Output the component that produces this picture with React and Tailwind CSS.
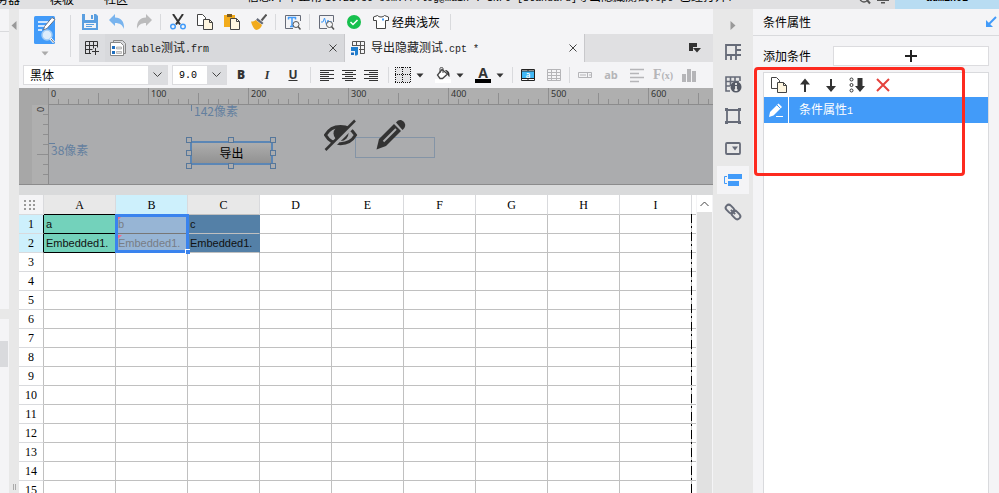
import clsx from 'clsx'

const COLUMNS = ['A', 'B', 'C', 'D', 'E', 'F', 'G', 'H', 'I']
const ROWS = Array.from({ length: 15 }, (_, i) => i + 1)
const TICKS = Array.from({ length: 120 }, (_, i) => i)
const V_TICKS = [1, 2, 3, 4, 5, 6, 7]

const CELLS = {
  A1: 'a', B1: 'b', C1: 'c',
  A2: 'Embedded1.', B2: 'Embedded1.', C2: 'Embedded1.',
}

const SANS = 'font-["Noto_Sans_CJK_SC",sans-serif]'

function Icon({ size = 16, children, className }) {
  return (
    <svg width={size} height={size} viewBox={`0 0 ${size} ${size}`} fill="none" className={clsx('shrink-0', className)} aria-hidden="true">
      {children}
    </svg>
  )
}

function Mono({ children }) {
  return <span className='font-["Liberation_Mono",monospace] text-[10px]'>{children}</span>
}

function ToolButton({ label, children, className = 'w-[27px]' }) {
  return (
    <button type="button" aria-label={label} className={clsx('flex h-6 shrink-0 items-center justify-center', className)}>
      {children}
    </button>
  )
}

function Divider({ className }) {
  return <span className={clsx('h-4 w-px shrink-0 bg-[#d9dadd]', className)} />
}

function Caret({ className = 'text-[#333]' }) {
  return (
    <svg width="8" height="5" viewBox="0 0 8 5" className={clsx('shrink-0', className)} aria-hidden="true">
      <path d="M0.5 0.5h7L4 4.5z" fill="currentColor" />
    </svg>
  )
}

/* ---------- top strip ---------- */

function TopStrip() {
  return (
    <header className="flex h-[9px] shrink-0 items-end overflow-hidden bg-[#e0e0e2] text-xs leading-3 text-black">
      <nav className="flex w-[247px] shrink-0 items-end gap-[30px] overflow-hidden pb-1 whitespace-nowrap">
        <span className="-ml-4">服务器</span>
        <span>模板</span>
        <span>社区</span>
      </nav>
      <div className="flex min-w-0 flex-1 items-end overflow-hidden pb-1 whitespace-nowrap">
        <p className="w-[330px] shrink-0">信息:下午正常 <Mono>10:21:36 com.fr.log@main : INFO [Standard]</Mono></p>
        <p>导出隐藏测试<Mono>.cpt </Mono>已经打开<Mono>!</Mono></p>
      </div>
      <div className="flex h-[9px] shrink-0 gap-1.5 pr-1.5">
        <svg width="12" height="9" viewBox="0 0 12 9" fill="none" stroke="#555" aria-hidden="true">
          <circle cx="5" cy="-2" r="4" strokeWidth="1.5" />
          <path d="M8 0l3 3.500" strokeWidth="2" />
        </svg>
        <svg width="12" height="9" viewBox="0 0 12 9" fill="#555" aria-hidden="true">
          <path d="M0 0h12v1H0zM4 2h4v1.500H4z" />
        </svg>
      </div>
      <div className="flex h-[9px] w-[104px] shrink-0 items-end justify-center overflow-hidden bg-[#b8dcf2] pb-1 font-bold">
        <Mono>admin01</Mono>
      </div>
    </header>
  )
}

/* ---------- toolbar ---------- */

function PreviewButton() {
  return (
    <button type="button" aria-label="预览" className="flex w-[51px] shrink-0 flex-col items-center gap-1.5 pt-[7px]">
      <svg width="22" height="29" viewBox="0 0 22 29" fill="none" aria-hidden="true">
        <rect x="0" y="0" width="21" height="28" rx="1.500" fill="#429bf9" />
        <path d="M4 6h10M4 10h7M4 14h4" stroke="#fff" strokeWidth="1.500" />
        <path d="M18 1.500l3 2-8 9-3.500 1.500 1-3.500z" fill="#fff" stroke="#666b78" strokeWidth=".9" />
        <circle cx="13" cy="19" r="5" fill="#dcecfb" stroke="#9fcbf6" strokeWidth="1.500" />
        <path d="M16.500 22.500l3.500 4" stroke="#fff" strokeWidth="2.500" />
        <path d="M17 23l3 3.500" stroke="#666b78" />
      </svg>
      <Caret className="text-[#aaa]" />
    </button>
  )
}

function MainTools() {
  return (
    <div className="flex h-[25px] items-center pl-[5px]">
      <ToolButton label="保存">
        <Icon>
          <path d="M0 0h14l2 2v14H0z" fill="#5b9fe0" />
          <path d="M3 0h9v6H3z" fill="#f4f4f6" />
          <path d="M9 1h2v4H9z" fill="#5b9fe0" />
          <path d="M2 9h12v5H2z" fill="#f4f4f6" />
          <path d="M4 10.500h8M4 12.500h6" stroke="#5b9fe0" />
        </Icon>
      </ToolButton>
      <ToolButton label="撤销">
        <Icon>
          <path d="M0 6l6-6v3.500c6 0 9.500 4 9 11.500-1.500-4-4-6-9-6V12z" fill="#79b4ee" />
        </Icon>
      </ToolButton>
      <ToolButton label="重做">
        <Icon>
          <path d="M16 6l-6-6v3.500c-6 0-9.500 4-9 11.500 1.500-4 4-6 9-6V12z" fill="#bbbbbc" />
        </Icon>
      </ToolButton>
      <Divider className="mx-[3px]" />
      <ToolButton label="剪切">
        <Icon>
          <path d="M3 0l7 10.500M13 0L6 10.500" stroke="#333" strokeWidth="2" />
          <circle cx="3" cy="12.500" r="2.300" stroke="#429bf9" strokeWidth="1.500" />
          <circle cx="13" cy="12.500" r="2.300" stroke="#429bf9" strokeWidth="1.500" />
        </Icon>
      </ToolButton>
      <ToolButton label="复制"><CopyIcon /></ToolButton>
      <ToolButton label="粘贴">
        <Icon>
          <path d="M0 1h11v12H0z" fill="#f2ab1c" />
          <path d="M3 0h5v3H3z" fill="#7b5b22" />
          <path d="M6.500 4.500h6l3 3v8h-9z" fill="#fff6e0" stroke="#444" />
          <path d="M12.500 4.500v3h3" stroke="#444" />
        </Icon>
      </ToolButton>
      <ToolButton label="格式刷">
        <Icon>
          <path d="M15.500 0.500l-5 6" stroke="#555" strokeWidth="2" />
          <path d="M6.500 4l6 5-1.500 1.500-6-4.500z" fill="#666b78" />
          <path d="M4.500 6l6.500 5c-1 3-3 4.500-6 5-2-1-4-4-5-8.500 2 0 3.500-.5 4.500-1.500z" fill="#f2ab1c" />
        </Icon>
      </ToolButton>
      <Divider className="mx-[3px]" />
      <ToolButton label="文本搜索">
        <Icon>
          <path d="M15.500 7V1.500h-15v13H8" stroke="#666b78" />
          <path d="M3 3.500h8M7 3.500v9M3.500 3v2.500M10.500 3v2.500M5 12.500h4" stroke="#429bf9" strokeWidth="1.500" />
          <circle cx="11" cy="10.500" r="3" fill="#f4f4f6" stroke="#555" />
          <path d="M13 12.500l2.500 3" stroke="#555" strokeWidth="1.500" />
        </Icon>
      </ToolButton>
      <Divider className="mx-[3px]" />
      <ToolButton label="性能分析">
        <Icon>
          <path d="M14.500 8V1.500h-14v13H8" stroke="#666b78" />
          <path d="M2 8h2l1.500-4 2 7L9 6l1 2h3" stroke="#429bf9" />
          <circle cx="10.500" cy="10.500" r="3" fill="#f4f4f6" stroke="#555" />
          <path d="M12.500 12.500l2.500 3" stroke="#555" strokeWidth="1.500" />
        </Icon>
      </ToolButton>
      <ToolButton label="校验">
        <Icon>
          <circle cx="8" cy="8" r="7" fill="#17c04e" />
          <path d="M4.500 8l2.500 2.500 4.500-4.500" stroke="#fff" strokeWidth="1.500" />
        </Icon>
      </ToolButton>
      <button type="button" className="ml-1.5 flex shrink-0 items-center gap-[3px] text-xs leading-4 text-black">
        <Icon>
          <path d="M4.500 1.500L.5 3v3.500h3v8h9v-8h3V3l-4-1.500c-1 2-6 2-7 0z" fill="#fff" stroke="#444" />
          <path d="M9 5.500h2" stroke="#429bf9" strokeWidth="2" />
        </Icon>
        经典浅灰
      </button>
      <Divider className="ml-2.5" />
    </div>
  )
}

function CopyIcon() {
  return (
    <Icon>
      <path d="M.5.5h5l3 3v8h-8z" fill="#fff" stroke="#444" />
      <path d="M6.500 5.500h6l3 3v7h-9z" fill="#fff6e0" stroke="#444" />
      <path d="M12.500 5.500v3h3" stroke="#444" />
    </Icon>
  )
}

function CloseIcon() {
  return (
    <svg width="8" height="8" viewBox="0 0 8 8" stroke="#444" aria-hidden="true">
      <path d="M.5.5l7 7M7.500.5l-7 7" />
    </svg>
  )
}

function Tab({ icon, active, children }) {
  return (
    <div
      className={clsx(
        'flex h-7 w-60 shrink-0 items-center border-r border-[#c8c8cb] pr-[7px] pl-[5px]',
        active ? 'bg-[#f4f4f6]' : 'bg-[#d8d9dc]',
      )}
    >
      {icon}
      <span className="ml-[5px] flex-1 text-xs leading-4 whitespace-pre text-[#222]">{children}</span>
      <button type="button" aria-label="关闭"><CloseIcon /></button>
    </div>
  )
}

function TabBar() {
  return (
    <div className="ml-2 flex h-7 bg-[#e0e0e2]">
      <ToolButton label="新建" className="h-7 w-[26px] bg-[#dcdde0]">
        <Icon>
          <path d="M1.500 13.500v-12h12v6M1.500 5.500h12M1.500 9.500h7M5.500 1.500v12M9.500 1.500v7M1 13.500h6M11.500 8v7M8 11.500h7" stroke="#333" />
        </Icon>
      </ToolButton>
      <Tab
        icon={
          <Icon>
            <path d="M3.500 2V.5h9l3 3v10h-2" stroke="#888" />
            <path d="M.5 2.500h10l3 3v10H.5z" fill="#fff" stroke="#888" />
            <path d="M2 6h3v3H2zM2 11h3v3H2z" fill="#1f6fc0" />
            <path d="M6.500 7h5v2h-5zM6.500 11.500h5v2h-5z" fill="#ddd" stroke="#999" strokeWidth=".6" />
          </Icon>
        }
      >
        <Mono>table</Mono>测试<Mono>.frm</Mono>
      </Tab>
      <Tab
        active
        icon={
          <Icon>
            <path d="M2.500 5V1.500h12v12H10M2 5.500h12.500M6.500 1.500v4M10.500 1.500v12M9 9.500h5.500" stroke="#555" />
            <path d="M1 7h7v7.500c-1 1-2 1-3 1V11H1z" fill="#1f7fd0" />
            <path d="M1 12.500h3V15H1z" fill="#1f6fc0" />
          </Icon>
        }
      >
        导出隐藏测试<Mono>.cpt *</Mono>
      </Tab>
      <div className="flex flex-1 items-center justify-end pr-3">
        <button type="button" aria-label="标签列表">
          <svg width="12" height="10" viewBox="0 0 12 10" fill="#333" aria-hidden="true">
            <path d="M0 0h8v4H4v4H0zM4 5h8L8 9.500z" />
          </svg>
        </button>
      </div>
    </div>
  )
}

/* ---------- format bar ---------- */

function Picker({ label, value, className, mono }) {
  return (
    <div className={clsx('relative flex h-5 shrink-0 border border-[#dcdcdf] bg-white', className)}>
      <select
        aria-label={label}
        className={clsx(
          'w-full appearance-none pl-1.5 text-black outline-none',
          mono ? 'font-["Liberation_Mono",monospace] text-[10px]' : 'text-xs leading-4',
        )}
      >
        <option>{value}</option>
      </select>
      <span className="pointer-events-none absolute inset-y-0 right-0 flex w-[19px] items-center justify-center bg-[#dcdde0]">
        <svg width="9" height="6" viewBox="0 0 9 6" fill="none" stroke="#444" aria-hidden="true">
          <path d="M.5.5l4 4 4-4" />
        </svg>
      </span>
    </div>
  )
}

function AlignIcon({ d }) {
  return (
    <Icon className="text-[#333]">
      <path d={d} stroke="currentColor" />
    </Icon>
  )
}

function FormatBar() {
  return (
    <div className="flex h-[26px] items-center bg-[#f4f4f6] pl-1">
      <Picker label="字体" value="黑体" className="w-[145px]" />
      <Picker label="字号" value="9.0" className="mr-px ml-1 w-[55px]" mono />
      <ToolButton label="加粗" className="w-[26px]">
        <b className='font-["Open_Sans",sans-serif] text-xs font-extrabold text-[#333]'>B</b>
      </ToolButton>
      <ToolButton label="斜体" className="w-[26px]">
        <i className='font-["Liberation_Serif",serif] text-xs font-bold text-[#333]'>I</i>
      </ToolButton>
      <ToolButton label="下划线" className="w-[26px]">
        <u className='font-["Open_Sans",sans-serif] text-xs font-bold text-[#333]'>U</u>
      </ToolButton>
      <Divider className="mr-[5px] ml-1" />
      <ToolButton label="左对齐" className="w-[22px]">
        <AlignIcon d="M1 3.500h14M1 5.500h9M1 7.500h14M1 9.500h9M1 11.500h14M1 13.500h9" />
      </ToolButton>
      <ToolButton label="居中" className="w-[22px]">
        <AlignIcon d="M1 3.500h14M4 5.500h8M1 7.500h14M4 9.500h8M1 11.500h14M4 13.500h8" />
      </ToolButton>
      <ToolButton label="右对齐" className="w-[22px]">
        <AlignIcon d="M1 3.500h14M6 5.500h9M1 7.500h14M6 9.500h9M1 11.500h14M6 13.500h9" />
      </ToolButton>
      <Divider className="mr-px ml-1.5" />
      <div className="flex shrink-0 items-center gap-1.5">
        <div className="flex items-center">
          <ToolButton label="边框" className="w-[26px]">
            <Icon>
              <path d="M1 1h14v14H1z" fill="#e4e4e6" />
              <path d="M0 .5h16M0 15.500h16M.5 0v16M15.500 0v16M0 7.500h16M7.500 0v16" stroke="#111" strokeDasharray="1 1" />
            </Icon>
          </ToolButton>
          <Caret />
        </div>
        <div className="flex items-center">
          <ToolButton label="背景色" className="w-[26px]">
            <Icon>
              <path d="M0 12h16v4H0z" fill="#fff" />
              <path d="M7 2.500l5.500 4.500-5 4.500H5L2.500 8z" fill="#fff" stroke="#444" strokeWidth="1.300" />
              <path d="M5 6V1.500c0-1.500 3-1.500 3 0V6" stroke="#444" />
              <path d="M10 3c3 0 5 2 4.500 7-1-.5-2-2-2-4z" fill="#333" />
            </Icon>
          </ToolButton>
          <Caret />
        </div>
        <div className="flex items-center">
          <ToolButton label="字体颜色" className="w-[26px]">
            <span className='flex w-4 justify-center border-b-4 border-black font-["Open_Sans",sans-serif] text-sm leading-3 font-bold text-[#333]'>A</span>
          </ToolButton>
          <Caret />
        </div>
      </div>
      <Divider className="mr-0.5 ml-2" />
      <ToolButton label="合并单元格" className="w-[26px]">
        <Icon>
          <path d="M1.500 2.500h13v11h-13z" fill="#fff" stroke="#222" />
          <path d="M2 4h12v7.500H2z" fill="#41b8f5" />
          <path d="M1 4h14M1 11.500h14M8 2v2M8 12v2" stroke="#222" />
          <text x="8" y="10.500" textAnchor="middle" fill="#fff" fontSize="8" fontFamily="Open Sans" fontWeight="600">a</text>
        </Icon>
      </ToolButton>
      <ToolButton label="拆分单元格" className="w-[26px]">
        <Icon>
          <path d="M1.500 2.500h13v11h-13zM1 5.500h14M1 8.500h14M1 11.500h14M5.500 2v12M10.500 2v12" stroke="#b5b5b8" />
        </Icon>
      </ToolButton>
      <Divider className="mx-0.5" />
      <ToolButton label="控件" className="w-[26px]">
        <Icon>
          <path d="M1.500 5.500h13v5h-13zM10.500 5v6M3 8h6M12 8h2" stroke="#b5b5b8" />
        </Icon>
      </ToolButton>
      <ToolButton label="文本" className="w-[26px]">
        <span className='font-["Open_Sans",sans-serif] text-[11px] font-bold text-[#b5b5b8]'>ab</span>
      </ToolButton>
      <ToolButton label="富文本" className="w-[26px]">
        <Icon>
          <path d="M1 2.500h14M1 6.500h9M1 10.500h14M1 14.500h9" stroke="#b5b5b8" strokeWidth="1.500" />
        </Icon>
      </ToolButton>
      <ToolButton label="公式" className="w-[26px]">
        <span className='font-["Liberation_Serif",serif] text-sm font-bold text-[#b5b5b8]'>F<span className="text-[10px]">(x)</span></span>
      </ToolButton>
      <ToolButton label="图表" className="w-[26px]">
        <Icon>
          <path d="M1 7h4v8H1zM6 2h4v13H6zM11 4h4v11h-4z" fill="#b5b5b8" />
        </Icon>
      </ToolButton>
    </div>
  )
}

/* ---------- parameter canvas ---------- */

function Ruler() {
  return (
    <div className="flex h-[17px] bg-[#afafaf]">
      <div className="w-[29px] shrink-0 bg-[#a7a7a7]" />
      <div className="flex min-w-0 flex-1 items-end overflow-hidden border-b border-[#8b8b8c]">
        {TICKS.map((i) => (
          <span
            key={i}
            className={clsx(
              'relative w-2.5 shrink-0 border-l border-[#8f8f90]',
              i % 10 === 0 ? 'h-4' : i % 5 === 0 ? 'h-[11px]' : 'h-[5px]',
            )}
          >
            {i % 10 === 0 && (
              <span className='absolute top-0 left-0.5 font-["Noto_Sans",sans-serif] text-[9px] leading-3 text-[#333]'>
                {i * 10}
              </span>
            )}
          </span>
        ))}
      </div>
    </div>
  )
}

const HANDLES = [
  'left-[137px] top-8', 'left-[179px] top-8', 'left-[221px] top-8',
  'left-[137px] top-[45px]', 'left-[221px] top-[45px]',
  'left-[137px] top-[58px]', 'left-[179px] top-[58px]', 'left-[221px] top-[58px]',
]

function Canvas() {
  return (
    <div className="flex h-20 border-b border-[#8b8b8c]">
      <div className="w-[13px] shrink-0 bg-[#a7a7a7]" />
      <div className="flex w-[17px] shrink-0 flex-col items-end border-r border-[#8b8b8c] bg-[#afafaf]">
        <span className='flex h-[9px] w-full -rotate-90 items-center justify-center font-["Noto_Sans",sans-serif] text-[9px] leading-3 text-[#333]'>0</span>
        {V_TICKS.map((i) => (
          <span key={i} className={clsx('h-2.5 shrink-0 border-t border-[#8f8f90]', i === 5 ? 'w-[11px]' : 'w-[5px]')} />
        ))}
      </div>
      {/* free-form widget area */}
      <div className="relative min-w-0 flex-1 overflow-hidden bg-[#abacae] text-xs leading-3 text-[#64809f]">
        <span className="absolute top-0 left-[142px] h-1.5 w-px bg-[#64809f]" />
        <span className="absolute top-0 left-[145px]">142像素</span>
        <span className="absolute top-[38px] left-0 h-px w-1.5 bg-[#64809f]" />
        <span className="absolute top-[39px] left-0.5">38像素</span>
        <button
          type="button"
          className="absolute top-9 left-[141px] h-6 w-[83px] border-2 border-[#5b86b5] bg-linear-to-b from-[#adadad] to-[#929292] text-black"
        >
          导出
        </button>
        {HANDLES.map((pos) => (
          <span key={pos} className={clsx('absolute size-1.5 border border-[#56779b] bg-[#abacae]', pos)} />
        ))}
        <input aria-label="文本框" className="absolute top-8 left-[306px] h-[21px] w-20 border border-[#8494a6]" />
        <svg className="absolute top-3.5 left-[275px]" width="34" height="33" viewBox="0 0 34 33" fill="none" aria-hidden="true">
          <path d="M1.500 16C8 4.500 25 4.500 31.500 16C25 27.500 8 27.500 1.500 16z" stroke="#333" strokeWidth="3" />
          <circle cx="17" cy="14.500" r="7.500" fill="#333" />
          <path d="M33 3L3 33" stroke="#abacae" strokeWidth="4" />
          <path d="M31 1.500L1.500 31" stroke="#333" strokeWidth="2.500" />
        </svg>
        <svg className="absolute top-3.5 left-[326px]" width="32" height="32" viewBox="0 0 32 32" fill="none" aria-hidden="true">
          <path d="M4 20L19 5l7 7-15 15-9.500 3.500z" fill="#333" />
          <path d="M21 3.500c2.500-3.500 5.500-3 7.500-1s2.500 5 0 7.500l-1 1z" fill="#333" />
          <path d="M8.500 22.500L21 10" stroke="#abacae" strokeWidth="2" />
        </svg>
      </div>
    </div>
  )
}

/* ---------- sheet ---------- */

function cellClass(col, row) {
  if (row > 2) return 'border-[#c0c0c0]'
  if (col === 'A') return 'border-black bg-[#73d2bb] text-[#111]'
  if (col === 'B') return 'border-[#777] bg-[#97b5d5] text-[#777d86]'
  if (col === 'C') return 'border-r-[#5480a7] border-b-[#c0c0c0] bg-[#5480a7] text-[#111]'
  return 'border-[#c0c0c0]'
}

function Sheet() {
  return (
    <div className="flex min-h-0 flex-1">
      <div className="relative min-w-0 flex-1 overflow-hidden bg-white">
        <table className="w-full table-fixed border-separate border-spacing-0 text-black">
          <thead className='font-["Liberation_Serif",serif] text-xs leading-4'>
            <tr className="h-5">
              <th className="w-[25px] border-r border-b border-[#d9dadd] bg-[#f4f4f6] p-0">
                <svg width="24" height="16" viewBox="0 0 24 16" aria-hidden="true">
                  <path d="M5 3h2v2H5zm5 0h2v2h-2zm4 0h2v2h-2zM5 7h2v2H5zm5 0h2v2h-2zm4 0h2v2h-2zM5 11h2v2H5zm5 0h2v2h-2zm4 0h2v2h-2z" fill="#999" />
                </svg>
              </th>
              {COLUMNS.map((col) => (
                <th
                  key={col}
                  scope="col"
                  className={clsx(
                    'w-[72px] border-r border-b border-r-[#d9dadd] p-0 font-medium',
                    col === 'A' ? 'border-b-black' : 'border-b-[#c0c0c0]',
                    col === 'B' ? 'bg-[#cdf0fc]' : 'ABC'.includes(col) ? 'bg-[#e8e8e8]' : 'bg-white',
                  )}
                >
                  {col}
                </th>
              ))}
              <th className="border-b border-[#c0c0c0] p-0" />
            </tr>
          </thead>
          <tbody>
            {ROWS.map((row) => (
              <tr key={row} className="h-[19px]">
                <th
                  scope="row"
                  className={clsx(
                    'border-r border-b border-b-[#d9dadd] p-0 font-["Liberation_Serif",serif] text-xs leading-4 font-medium',
                    row < 3 ? 'border-r-black bg-[#cdf0fc]' : 'border-r-[#c0c0c0] bg-white',
                  )}
                >
                  {row}
                </th>
                {COLUMNS.map((col) => (
                  <td
                    key={col}
                    className={clsx(
                      'relative border-r border-b p-0 pl-0.5 font-["Liberation_Sans",sans-serif] text-[11px] leading-4',
                      cellClass(col, row),
                    )}
                  >
                    {CELLS[col + row]}
                    {/* condition marker */}
                    {col === 'B' && row < 3 && (
                      <span className="absolute top-px left-0.5 border-t-4 border-r-4 border-t-[#f46a8a] border-r-transparent" />
                    )}
                    {/* selection frame over B1:B2 */}
                    {col === 'B' && row === 1 && (
                      <span className="pointer-events-none absolute -top-px -left-px z-10 h-[39px] w-[74px] border-[3px] border-[#3a83ee]">
                        <span className="absolute -right-1 -bottom-1 size-[5px] border-t border-l border-white bg-[#3a83ee]" />
                      </span>
                    )}
                  </td>
                ))}
                <td className="border-b border-[#c0c0c0] p-0" />
              </tr>
            ))}
          </tbody>
        </table>
        {/* page break */}
        <span className="absolute top-[19px] bottom-0 left-[672px] w-px bg-[repeating-linear-gradient(to_bottom,#000_0_9px,#c0c0c0_9px_12px,#000_12px_14px,#c0c0c0_14px_18px)]" />
      </div>
      <div className="flex w-[17px] shrink-0 flex-col border-x border-[#f4f4f6] bg-[#e1e1e1]">
        <button type="button" aria-label="向上滚动" className="flex h-[17px] items-center justify-center bg-white">
          <svg width="9" height="6" viewBox="0 0 9 6" fill="none" stroke="#444" aria-hidden="true">
            <path d="M.5 5l4-4 4 4" />
          </svg>
        </button>
      </div>
    </div>
  )
}

/* ---------- side rail and property panel ---------- */

const RAIL = [
  {
    label: '单元格元素',
    icon: (
      <path d="M2 17V2h15M2 12h15M12 2v10M12 7h5M7 12v5M12 12v5" stroke="#666b78" strokeWidth="1.800" />
    ),
  },
  {
    label: '单元格属性',
    icon: (
      <>
        <path d="M6 16H2V2h14v4M2 6.500h13M6.500 2v9M11 2v4M2 11h4" stroke="#666b78" strokeWidth="1.600" />
        <circle cx="12" cy="12" r="5.500" fill="#555a66" />
        <path d="M12 8v2M12 11v4M10.500 15h3" stroke="#e8e8e8" strokeWidth="1.800" />
      </>
    ),
  },
  {
    label: '悬浮元素',
    icon: (
      <>
        <path d="M3 3h12v12H3z" stroke="#666b78" strokeWidth="1.800" />
        <path d="M1 1h3v3H1zM14 1h3v3h-3zM1 14h3v3H1zM14 14h3v3h-3z" fill="#666b78" />
      </>
    ),
  },
  {
    label: '控件设置',
    icon: (
      <>
        <rect x="2" y="4" width="14" height="11" rx="1" stroke="#666b78" strokeWidth="1.800" />
        <path d="M8 7.500h6l-3 4z" fill="#666b78" />
      </>
    ),
  },
  {
    label: '条件属性',
    active: true,
    icon: (
      <>
        <path d="M3 5.500H.5v7H3" stroke="#429bf9" />
        <path d="M4 3h14v5H4zM4 10h11v5H4z" fill="#429bf9" />
      </>
    ),
  },
  {
    label: '超级链接',
    icon: (
      <g stroke="#666b78" strokeWidth="2" transform="rotate(45 9 9)">
        <rect x="0" y="6" width="9.500" height="6" rx="3" />
        <rect x="8.500" y="6" width="9.500" height="6" rx="3" />
        <path d="M6 9h6" />
      </g>
    ),
  },
]

function SideRail() {
  return (
    <nav className="flex w-10 shrink-0 flex-col items-center bg-[#e8e8e8]">
      <button type="button" aria-label="收起" className="flex h-[27px] items-center pt-1.5">
        <svg width="6" height="9" viewBox="0 0 6 9" aria-hidden="true"><path d="M.5 0v9L5.500 4.500z" fill="#999" /></svg>
      </button>
      {RAIL.map((item) => (
        <button
          key={item.label}
          type="button"
          aria-label={item.label}
          className={clsx('my-0.5 flex h-7 w-8 items-center justify-center', item.active && 'bg-[#f4f4f6]')}
        >
          <Icon size={18}>{item.icon}</Icon>
        </button>
      ))}
    </nav>
  )
}

function PropertyPanel() {
  return (
    <aside className="relative flex w-[246px] shrink-0 flex-col bg-[#f4f4f6] text-xs leading-4 text-black">
      <div className="flex h-[27px] items-center justify-between border-b border-[#d9dadd] pr-0.5 pl-2.5">
        <h2>条件属性</h2>
        <button type="button" aria-label="停靠">
          <svg width="12" height="12" viewBox="0 0 12 12" fill="none" aria-hidden="true">
            <path d="M11 1L3 9" stroke="#429bf9" strokeWidth="2" />
            <path d="M1 4v7h7z" fill="#429bf9" />
          </svg>
        </button>
      </div>
      <div className="mt-2.5 flex h-5 items-center pr-2.5 pl-2.5">
        <label htmlFor="add-condition" className="w-[70px] shrink-0">添加条件</label>
        <button id="add-condition" type="button" className="flex h-5 flex-1 items-center justify-center border border-[#dcdcdf] bg-white">
          <svg width="12" height="12" viewBox="0 0 12 12" aria-hidden="true"><path d="M5 0h2v5h5v2H7v5H5V7H0V5h5z" fill="#222" /></svg>
        </button>
      </div>
      <div className="mt-1.5 mr-2.5 ml-2.5 flex min-h-0 flex-1 flex-col border-x border-t border-[#d9dadd] bg-white">
        <div className="flex h-6 items-center pl-0.5">
          <ToolButton label="复制" className="w-[26px]"><CopyIcon /></ToolButton>
          <ToolButton label="上移" className="w-[26px]">
            <Icon>
              <path d="M8 1.500l5 6H9V15H7V7.500H3z" fill="#333" />
            </Icon>
          </ToolButton>
          <ToolButton label="下移" className="w-[26px]">
            <Icon>
              <path d="M8 15l5-6H9V2H7v7H3z" fill="#333" />
            </Icon>
          </ToolButton>
          <ToolButton label="排序" className="w-[26px]">
            <Icon>
              <path d="M8.500 1h5v8H16l-5 6-5-6h2.500z" fill="#333" />
              <circle cx="2.500" cy="2.500" r="1.500" stroke="#333" />
              <circle cx="2.500" cy="8" r="1.500" stroke="#333" />
              <circle cx="2.500" cy="13.500" r="1.500" stroke="#333" />
            </Icon>
          </ToolButton>
          <ToolButton label="删除" className="w-[26px]">
            <Icon>
              <path d="M2 2l12 12M14 2L2 14" stroke="#e5423c" strokeWidth="2" />
            </Icon>
          </ToolButton>
        </div>
        <ul>
          <li className="flex h-[26px] items-center bg-[#429bf9] text-white">
            <button type="button" aria-label="编辑" className="flex h-full w-[25px] items-center justify-center border-r border-white">
              <Icon>
                <path d="M2 10L10.500 1.500l3.500 3.500L5.500 13.500 1 15z" fill="#fff" />
                <path d="M9 3l3.500 3.500" stroke="#429bf9" />
                <path d="M8 14.500h7" stroke="#fff" />
              </Icon>
            </button>
            <span className="pl-2.5">条件属性<Mono>1</Mono></span>
          </li>
        </ul>
      </div>
      {/* highlight frame */}
      <div className="pointer-events-none absolute top-[58px] left-px h-[109px] w-[211px] rounded-sm border-[3px] border-[#fd2a1f]" />
    </aside>
  )
}

function LeftEdge() {
  return (
    <>
      <div className="flex w-[9px] shrink-0 flex-col bg-[#f4f4f6]">
        <div className="h-[23px] border-b border-[#d9dadd]" />
        <div className="h-[277px]" />
        <div className="h-2.5 bg-[#e8e8e8]" />
        <div className="h-[22px]" />
        <div className="mr-px h-[26px] bg-[#d9dadd]" />
      </div>
      <div className="flex w-2.5 shrink-0 flex-col items-center justify-between bg-[#e8e8e8] pt-3 pb-[3px]">
        <svg width="6" height="9" viewBox="0 0 6 9" aria-hidden="true"><path d="M5.500 0v9L.5 4.500z" fill="#999" /></svg>
        <span className="h-1.5 w-[3px] border-x border-[#aaa]" />
      </div>
    </>
  )
}

export default function App() {
  return (
    <div className={clsx('flex h-screen flex-col overflow-hidden bg-[#f4f4f6]', SANS)}>
      <TopStrip />
      <div className="flex min-h-0 flex-1">
        <LeftEdge />
        <main className="flex min-w-0 flex-1 flex-col">
          <div className="flex h-[53px] shrink-0">
            <PreviewButton />
            <Divider className="mt-1.5 h-[42px]" />
            <div className="min-w-0 flex-1">
              <MainTools />
              <TabBar />
            </div>
          </div>
          <FormatBar />
          <Ruler />
          <Canvas />
          <div className="h-2.5 shrink-0 bg-[#d9dadb]" />
          <Sheet />
        </main>
        <SideRail />
        <PropertyPanel />
      </div>
    </div>
  )
}
